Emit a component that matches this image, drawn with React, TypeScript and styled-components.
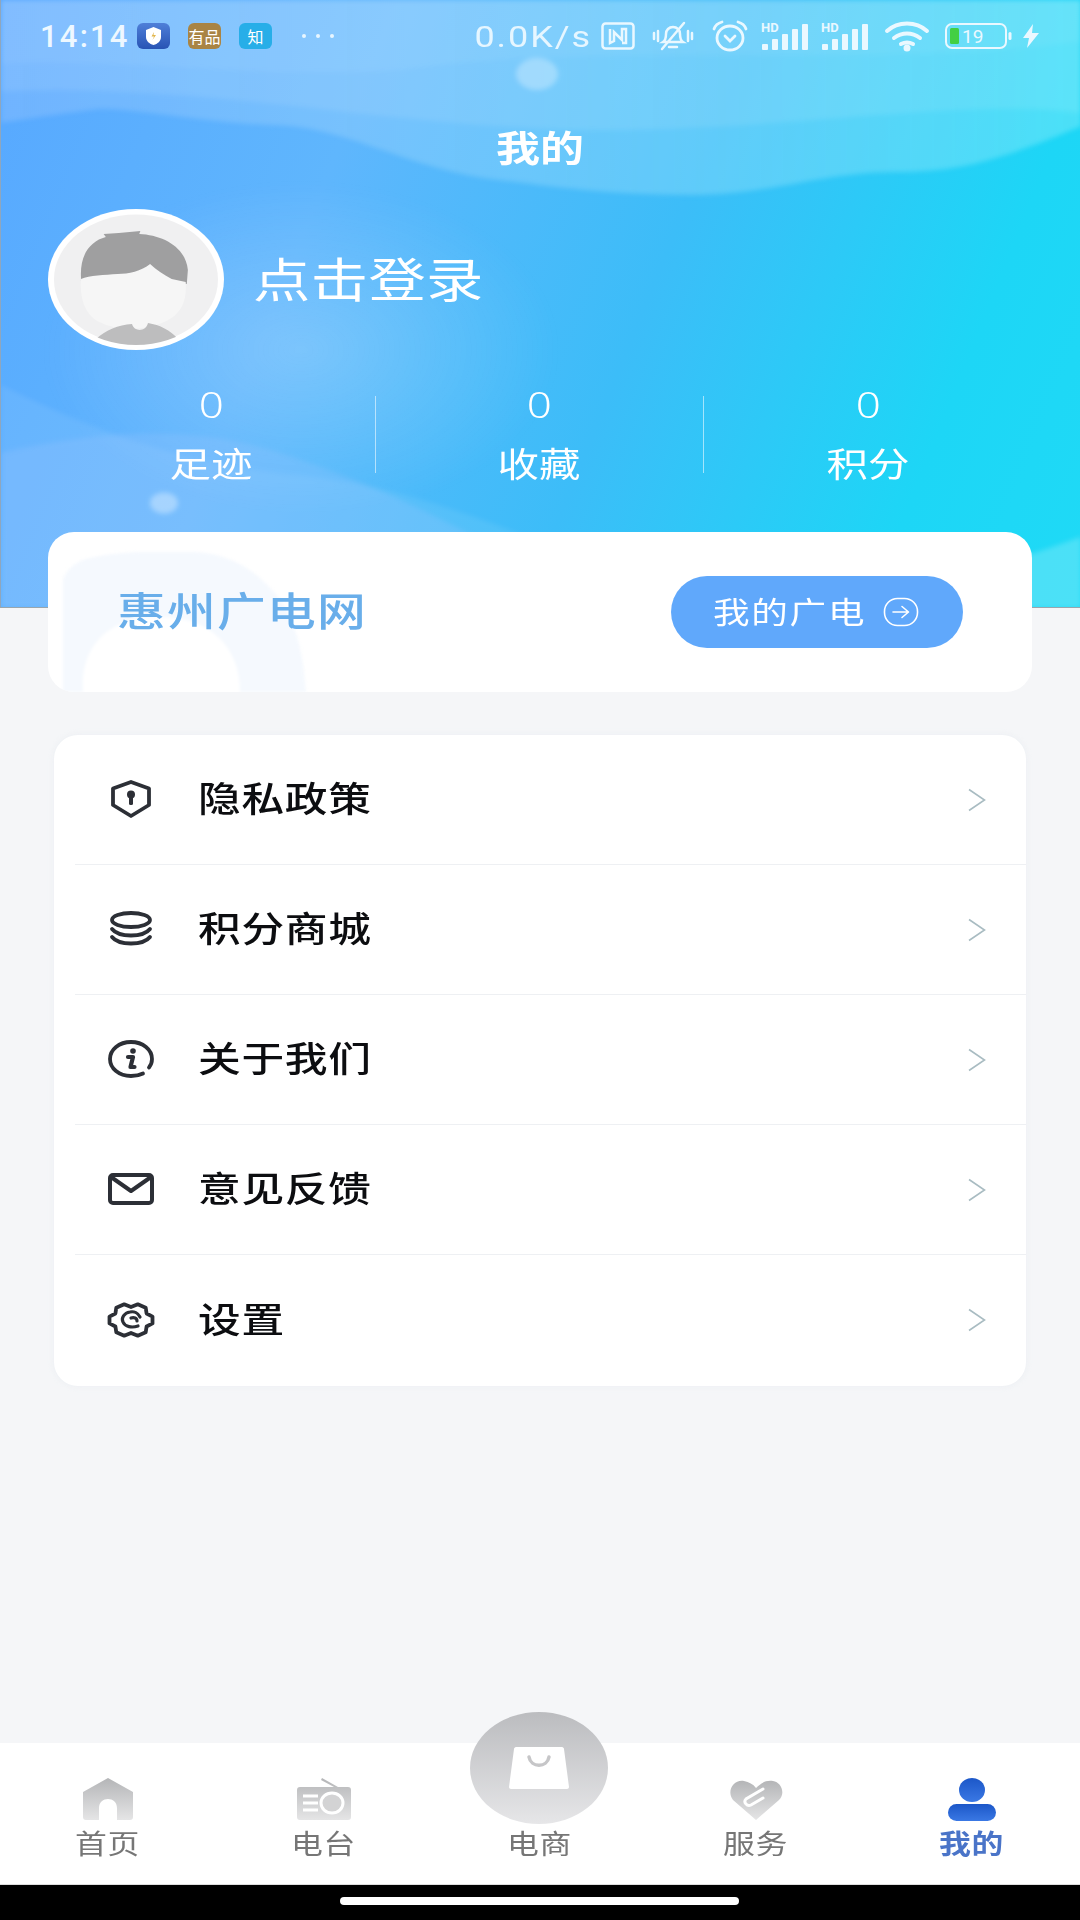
import React from "react";
import styled, { createGlobalStyle, css } from "styled-components";

const Global = createGlobalStyle`
  html, body { margin: 0; padding: 0; background: #f5f6f8; }
  * { box-sizing: border-box; }
  body { font-family: "Noto Sans CJK SC", "Noto Sans", sans-serif; }
`;

const wide = css`
  display: inline-block;
  transform: scaleX(1.22);
  white-space: nowrap;
`;

const Page = styled.div`
  width: 1080px;
  height: 1920px;
  display: flex;
  flex-direction: column;
  background: #f5f6f8;
  overflow: hidden;
`;

const Hero = styled.header`
  position: relative;
  height: 608px;
  flex: none;
  background: linear-gradient(112deg, #57a8ff 0%, #5fb6fd 30%, #3cbdf8 58%, #1dd6f6 84%, #1fdaf6 100%);
  border-bottom: 1px solid #9aa6ad;
  border-left: 1px solid #8fa6bd;
  color: #fff;
  overflow: hidden;
`;

const HeroWaves = styled.svg`
  position: absolute;
  inset: 0;
  width: 1080px;
  height: 608px;
  filter: blur(2.5px);
`;

const StatusBar = styled.div`
  position: relative;
  height: 72px;
  display: flex;
  align-items: center;
  padding: 0 40px 0 39px;
`;

const Clock = styled.span`
  font: 500 31px "Roboto", sans-serif;
  letter-spacing: 2.2px;
  width: 97px;
  color: #eef8ff;
`;

const AppBadge = styled.span<{ $bg: string; $gap: number }>`
  width: 33px;
  height: 26px;
  margin-right: ${(p) => p.$gap}px;
  border-radius: 6px;
  background: ${(p) => p.$bg};
  color: #fff;
  font-size: 16px;
  line-height: 26px;
  text-align: center;
  white-space: nowrap;
  overflow: hidden;
`;

const Dots = styled.span`
  display: flex;
  gap: 10px;
  margin-left: 30px;
`;

const Dot = styled.i`
  width: 4px;
  height: 4px;
  border-radius: 50%;
  background: #e8f6ff;
`;

const StatusRight = styled.div`
  margin-left: auto;
  display: flex;
  align-items: center;
`;

const Speed = styled.span`
  ${wide}
  transform: scaleX(1.2);
  transform-origin: right center;
  font: 400 30px "Roboto", sans-serif;
  letter-spacing: 1.6px;
  color: #e6f6ff;
  margin-right: 9px;
`;

const StatusIcon = styled.svg<{ $after?: number }>`
  display: block;
  flex: none;
  overflow: visible;
  margin-right: ${(p) => p.$after ?? 0}px;
`;

const PageTitle = styled.h1`
  position: relative;
  margin: 38px 0 0;
  height: 68px;
  padding-top: 2px;
  text-align: center;
  font-size: 36px;
  line-height: 68px;
  font-weight: 700;
  span { ${wide} }
`;

const Profile = styled.div`
  position: relative;
  display: flex;
  align-items: center;
  height: 141px;
  margin-top: 31px;
  padding-left: 47px;
  gap: 29px;
`;

const LoginText = styled.span`
  ${wide}
  transform-origin: left center;
  font-size: 47px;
  font-weight: 400;
  letter-spacing: 0.3px;
  margin-top: -6px;
`;

const Stats = styled.div`
  position: relative;
  display: grid;
  grid-template-columns: 328px 328px 1fr;
  margin-top: 46px;
  padding-left: 47px;
  width: 1032px;
`;

const Stat = styled.div<{ $divider?: boolean }>`
  height: 77px;
  display: flex;
  flex-direction: column;
  align-items: center;
  border-right: ${(p) => (p.$divider ? "1px solid rgba(255,255,255,.55)" : "none")};
`;

const StatValue = styled.span`
  ${wide}
  font: 300 36px/36px "Noto Sans", sans-serif;
  margin-top: -9px;
`;

const StatLabel = styled.span`
  ${wide}
  font-size: 34px;
  line-height: 44px;
  font-weight: 400;
  margin-top: 18px;
  margin-left: -2px;
`;

const BroadbandCard = styled.section`
  position: relative;
  margin: -76px 48px 0;
  height: 160px;
  flex: none;
  border-radius: 26px;
  background: #fff;
  display: flex;
  align-items: center;
  justify-content: space-between;
  padding: 0 69px 0 69px;
  overflow: hidden;
`;

const CardMark = styled.svg`
  position: absolute;
  left: 14px;
  top: 20px;
  filter: blur(1.5px);
`;

const Brand = styled.span`
  ${wide}
  position: relative;
  transform-origin: left center;
  font-size: 40px;
  line-height: 50px;
  font-weight: 500;
  letter-spacing: 1px;
  color: #69aeea;
  margin-top: -6px;
`;

const AccountButton = styled.button`
  position: relative;
  width: 292px;
  height: 72px;
  border: none;
  border-radius: 36px;
  background: #60a8fb;
  color: #fff;
  display: flex;
  align-items: center;
  padding: 0 0 0 42px;
  font-family: inherit;
  span {
    ${wide}
    transform-origin: left center;
    font-size: 30px;
    letter-spacing: 1.4px;
    margin-top: -4px;
  }
  svg { position: absolute; left: 212px; top: 21px; }
`;

const Menu = styled.ul`
  list-style: none;
  margin: 43px 54px 0;
  padding: 0 0 0 21px;
  height: 651px;
  flex: none;
  background: #fff;
  border-radius: 24px;
  box-shadow: 0 0 6px rgba(225, 230, 238, .45);
`;

const MenuRow = styled.li`
  height: 130px;
  display: flex;
  align-items: center;
  border-bottom: 1px solid #eef0f3;
  &:last-child { border-bottom: none; }
`;

const MenuIconSlot = styled.span`
  flex: none;
  width: 60px;
  margin-left: 26px;
  display: flex;
  justify-content: center;
  margin-top: -1px;
`;

const MenuLabel = styled.span`
  ${wide}
  transform-origin: left center;
  margin: -6px 0 0 37px;
  font-size: 35px;
  font-weight: 500;
  letter-spacing: .6px;
  color: #0c0d10;
`;

const Chevron = styled.svg`
  margin-left: auto;
  margin-right: 40px;
`;

const Spacer = styled.div`
  flex: 1;
`;

const TabBar = styled.nav`
  height: 142px;
  flex: none;
  background: #fff;
  display: grid;
  grid-template-columns: repeat(5, 1fr);
  border-bottom: 1px solid #ddd;
`;

const Tab = styled.div`
  position: relative;
  display: flex;
  flex-direction: column;
  align-items: center;
  padding-top: 35px;
`;

const TabLabel = styled.span<{ $active?: boolean }>`
  ${wide}
  transform: scaleX(1.18);
  margin-top: 1px;
  font-size: 27px;
  line-height: 40px;
  letter-spacing: .6px;
  font-weight: ${(p) => (p.$active ? 700 : 400)};
  color: ${(p) => (p.$active ? "#4a74c8" : "#767676")};
`;

const TabGlyph = styled.svg`
  display: block;
  height: 44px;
`;

const TabGap = styled.div`
  height: 44px;
`;

const ShopBubble = styled.div`
  position: absolute;
  left: 38px;
  top: -31px;
  width: 138px;
  height: 112px;
  border-radius: 50%;
  background: linear-gradient(180deg, #bbbcbf, #e6e6e8);
  display: flex;
  align-items: center;
  justify-content: center;
`;

const GestureBar = styled.div`
  flex: none;
  height: 35px;
  background: #000;
  display: flex;
  justify-content: center;
  padding-top: 12px;
`;

const GestureHandle = styled.i`
  width: 399px;
  height: 8px;
  border-radius: 4px;
  background: #fff;
  margin-left: -1px;
`;

const Signal = ({ after }: { after: number }) => (
  <StatusIcon $after={after} width="50" height="30" viewBox="0 0 50 30">
    <text x="0" y="11" fontSize="13" fontWeight="700" fontFamily="Roboto" fill="#eaf8ff">HD</text>
    <g fill="#eaf8ff">
      <rect x="1" y="23" width="6" height="6" rx="1" />
      <rect x="11" y="18" width="6" height="11" rx="1" />
      <rect x="21" y="13" width="6" height="16" rx="1" />
      <rect x="31" y="8" width="6" height="21" rx="1" />
      <rect x="41" y="3" width="6" height="26" rx="1" />
    </g>
  </StatusIcon>
);

const stroke = { fill: "none", stroke: "#2c2f36", strokeWidth: 3.8, strokeLinecap: "round" as const, strokeLinejoin: "round" as const };

const icons: Record<string, React.ReactNode> = {
  shield: (
    <svg width="44" height="40" viewBox="0 0 44 40">
      <path d="M22 3 40 9.5V26L22 37 4 26V9.5Z" {...stroke} />
      <circle cx="22" cy="15.5" r="4" fill="#2c2f36" />
      <rect x="20" y="16" width="4" height="10" rx="1.5" fill="#2c2f36" />
    </svg>
  ),
  coins: (
    <svg width="44" height="36" viewBox="0 0 44 36">
      <ellipse cx="22" cy="9" rx="19" ry="7" {...stroke} />
      <path d="M3 18c4 5 11 6.5 19 6.5S37 23 41 18" {...stroke} />
      <path d="M3 26c4 5 11 6.5 19 6.5S37 31 41 26" {...stroke} />
    </svg>
  ),
  info: (
    <svg width="48" height="38" viewBox="0 0 48 38">
      <path d="M36 33.5C32 35.5 28 36 24 36 12 36 3 28.5 3 19S12 2 24 2s21 7.5 21 17c0 3-1 6-3 8.5" {...stroke} />
      <circle cx="26" cy="11" r="2.8" fill="#2c2f36" />
      <path d="M21 17h5l-2.5 10h4" {...stroke} strokeWidth={4.2} />
    </svg>
  ),
  mail: (
    <svg width="46" height="32" viewBox="0 0 46 32">
      <rect x="2" y="2" width="42" height="28" rx="3" {...stroke} strokeWidth={4} />
      <path d="M3 4 23 18 43 4" {...stroke} strokeWidth={4} />
    </svg>
  ),
  gear: (
    <svg width="48" height="36" viewBox="0 0 48 36">
      <path d="M45.5 14.6V21.4L39.6 24.5 38.7 30.3 30.8 33.7 24 31 17.2 33.7 9.3 30.3 8.4 24.5 2.5 21.4V14.6L8.4 11.5 9.3 5.7 17.2 2.3 24 5 30.8 2.3 38.7 5.7 39.6 11.5Z" {...stroke} />
      <path d="M33 15c-2-4-6-6-10-5-6 1-9 6-7 10 2 5 9 6 15 4" {...stroke} strokeWidth={3.2} />
      <path d="M24 16c3-1 6 0 6 3" {...stroke} strokeWidth={3.2} />
    </svg>
  ),
};

const menu = [
  ["shield", "隐私政策"],
  ["coins", "积分商城"],
  ["info", "关于我们"],
  ["mail", "意见反馈"],
  ["gear", "设置"],
];

export default function App() {
  return (
    <Page>
      <Global />
      <Hero>
        <HeroWaves viewBox="0 0 1080 608" aria-hidden>
          <defs>
            <linearGradient id="topGlow" x1="0" x2="1" y1="0" y2="0">
              <stop offset="0" stopColor="#bcd4ff" stopOpacity=".24" />
              <stop offset=".5" stopColor="#c0ecff" stopOpacity=".26" />
              <stop offset="1" stopColor="#9ff2fb" stopOpacity=".36" />
            </linearGradient>
            <radialGradient id="midGlow" cx=".5" cy=".5" r=".5">
              <stop offset="0" stopColor="#ffffff" stopOpacity=".2" />
              <stop offset="1" stopColor="#ffffff" stopOpacity="0" />
            </radialGradient>
          </defs>
          <ellipse cx="300" cy="350" rx="260" ry="170" fill="url(#midGlow)" />
          <path d="M-10-10H1090V122C1000 160 960 172 895 172 820 172 770 195 690 195 600 195 540 185 482 178 400 165 340 125 270 125 190 122 120 105 90 110 50 115 20 120-10 124Z" fill="url(#topGlow)" />
          <path d="M-10-10H1090V115C980 95 800 130 600 130 400 130 200 80-10 92Z" fill="#ffffff" fillOpacity=".09" />
          <path d="M-10-10H1090V40C900 70 600 40 400 70 250 80 100 55-10 65Z" fill="#ffffff" fillOpacity=".05" />
          <path d="M-10 380C90 430 180 465 300 475 430 490 560 545 700 620H-10Z" fill="#ffffff" fillOpacity=".08" />
          <path d="M-10 455C100 430 180 425 270 450 400 490 520 560 620 620H-10Z" fill="#a9c8ff" fillOpacity=".2" />
          <path d="M860 620C950 575 1020 560 1090 533V620Z" fill="#ffffff" fillOpacity=".2" />
          <ellipse cx="536" cy="74" rx="21" ry="16" fill="#ffffff" fillOpacity=".3" />
          <ellipse cx="163" cy="503" rx="14" ry="10.5" fill="#ffffff" fillOpacity=".35" />
        </HeroWaves>

        <StatusBar>
          <Clock>14:14</Clock>
          <AppBadge $bg="linear-gradient(#4f7fd8,#2854b4)" $gap={18}>
            <svg width="33" height="26" viewBox="0 0 33 26">
              <path d="M16.5 4 24 7v7c0 4-3.5 7-7.5 8C12.5 21 9 18 9 14V7Z" fill="#fff" />
              <path d="M17 9l-2.5 4.5H17L15.5 17 19 12h-2.5Z" fill="#e2b64c" />
            </svg>
          </AppBadge>
          <AppBadge $bg="#a98444" $gap={18}>有品</AppBadge>
          <AppBadge $bg="#27aee8" $gap={0}>知</AppBadge>
          <Dots><Dot /><Dot /><Dot /></Dots>
          <StatusRight>
            <Speed>0.0K/s</Speed>
            <StatusIcon $after={16} width="34" height="28" viewBox="0 0 34 28" fill="none" stroke="#eaf8ff" strokeWidth="2.5">
              <rect x="1.5" y="1.5" width="31" height="25" rx="3" />
              <path d="M9 7V21L13 19V10L21 18V7H25V21H21" />
            </StatusIcon>
            <StatusIcon $after={15} width="44" height="30" viewBox="0 0 44 30" fill="none" stroke="#eaf8ff" strokeWidth="2.5" strokeLinecap="round">
              <path d="M12 21c3-2 3-6 3-8 0-4 3-7 7-7s7 3 7 7c0 3 0 6 3 8Z" />
              <path d="M18 26h8M33 2 11 28M3 12v6M7 10v10M37 10v10M41 12v6" />
            </StatusIcon>
            <StatusIcon $after={11} width="40" height="32" viewBox="0 0 40 32" fill="none" stroke="#eaf8ff" strokeWidth="2.8" strokeLinecap="round">
              <ellipse cx="20" cy="18" rx="13" ry="12" />
              <path d="M15 16l5 5 5-5M4 9c1-3 4-6 8-7M36 9c-1-3-4-6-8-7" />
            </StatusIcon>
            <Signal after={10} />
            <Signal after={13} />
            <StatusIcon $after={15} width="46" height="30" viewBox="0 0 46 30" fill="none" stroke="#eaf8ff" strokeWidth="4" strokeLinecap="round">
              <path d="M3 10C14 0 32 0 43 10M10 17c8-6 18-6 26 0M17 23c4-2 8-2 12 0" />
              <circle cx="23" cy="27" r="1.5" fill="#eaf8ff" />
            </StatusIcon>
            <StatusIcon $after={10} width="67" height="26" viewBox="0 0 67 26">
              <rect x="1" y="1" width="60" height="24" rx="6" fill="none" stroke="#eaf8ff" strokeWidth="2" />
              <rect x="5" y="5" width="9" height="16" rx="1.5" fill="#43cf43" />
              <rect x="63.5" y="9" width="3" height="8" rx="1.5" fill="#eaf8ff" />
              <text x="17" y="20" fontSize="19" fontFamily="Roboto" fill="#eaf8ff">19</text>
            </StatusIcon>
            <StatusIcon width="18" height="24" viewBox="0 0 18 24">
              <path d="M11 0 1 14h6L5 24 17 9h-7Z" fill="#eaf8ff" />
            </StatusIcon>
          </StatusRight>
        </StatusBar>

        <PageTitle><span>我的</span></PageTitle>

        <Profile>
          <svg width="176" height="141" viewBox="0 0 176 141" aria-hidden>
            <defs>
              <clipPath id="face"><ellipse cx="88" cy="70.5" rx="83" ry="65.5" /></clipPath>
            </defs>
            <ellipse cx="88" cy="70.5" rx="88" ry="70.5" fill="#fff" />
            <ellipse cx="88" cy="70.5" rx="82" ry="65" fill="#f0f0f1" />
            <g clipPath="url(#face)">
              <g transform="translate(-7 0) scale(1.08 1)">
                <path d="M37 68C36 45 46 32 60 28l-2-3 14-1 20-2-1 3c22 1 43 13 45 36l-1 14-14-3c-8-5-14-9-20-15-8 7-20 10-30 10-14 0-26 1-34 5Z" fill="#9f9fa0" />
                <path d="M37 70c8-4 22-4 34-5 10 0 22-3 30-10 6 6 12 10 20 15l13 3c1 18-3 32-20 40-18 9-44 9-60 0-14-8-18-24-17-43Z" fill="#f6f6f6" />
              </g>
              <path d="M48 130c10-9 22-14 36-15 2 8 14 8 16-1 12 2 22 7 30 16v10H48Z" fill="#bdbdbe" />
            </g>
          </svg>
          <LoginText>点击登录</LoginText>
        </Profile>

        <Stats>
          <Stat $divider><StatValue>0</StatValue><StatLabel>足迹</StatLabel></Stat>
          <Stat $divider><StatValue>0</StatValue><StatLabel>收藏</StatLabel></Stat>
          <Stat><StatValue>0</StatValue><StatLabel>积分</StatLabel></Stat>
        </Stats>
      </Hero>

      <BroadbandCard>
        <CardMark width="246" height="140" viewBox="0 0 246 140" aria-hidden>
          <path d="M1 140V30C1 20 15 8 28 6 60-2 120-2 144 1 170 5 190 18 200 28 225 50 240 80 244 140Z" fill="#f5f9fe" />
          <path d="M21 140C18 100 40 65 98 65 148 65 178 95 178 140Z" fill="#fff" />
        </CardMark>
        <Brand>惠州广电网</Brand>
        <AccountButton>
          <span>我的广电</span>
          <svg width="36" height="30" viewBox="0 0 36 30" fill="none" stroke="#fff" strokeWidth="1.6" strokeLinecap="round" strokeLinejoin="round">
            <rect x="1.5" y="1.5" width="33" height="27" rx="13" />
            <path d="M10 15h15M19 9.5 25.5 15 19 20.5" />
          </svg>
        </AccountButton>
      </BroadbandCard>

      <Menu>
        {menu.map(([icon, label]) => (
          <MenuRow key={label}>
            <MenuIconSlot>{icons[icon]}</MenuIconSlot>
            <MenuLabel>{label}</MenuLabel>
            <Chevron width="18" height="24" viewBox="0 0 18 24" fill="none" stroke="#a9bcc2" strokeWidth="1.6">
              <path d="M1 1.5 16.5 12 1 22.5" />
            </Chevron>
          </MenuRow>
        ))}
      </Menu>

      <Spacer />

      <TabBar>
        <Tab>
          <TabGlyph width="52" viewBox="0 0 52 44" aria-hidden>
            <defs>
              <linearGradient id="tabGrey" x1="0" x2="0" y1="0" y2="1">
                <stop offset="0" stopColor="#b4b5b7" />
                <stop offset="1" stopColor="#e5e5e6" />
              </linearGradient>
            </defs>
            <path d="M1 14 26 0l25 14v25c0 2-1 3-3 3H35V30c0-12-18-12-18 0v12H4c-2 0-3-1-3-3Z" fill="url(#tabGrey)" />
          </TabGlyph>
          <TabLabel>首页</TabLabel>
        </Tab>
        <Tab>
          <TabGlyph width="56" viewBox="0 0 56 44" aria-hidden>
            <path d="M26 0l16 9h10c2 0 3 1 3 3v27c0 2-1 3-3 3H4c-2 0-3-1-3-3V12c0-2 1-3 3-3h34L25 2Z" fill="url(#tabGrey)" />
            <path d="M7 18h15M7 25h15M7 32h15" stroke="#fff" strokeWidth="3" />
            <ellipse cx="36" cy="25" rx="11" ry="10" fill="#d3d3d4" stroke="#fff" strokeWidth="3" />
          </TabGlyph>
          <TabLabel>电台</TabLabel>
        </Tab>
        <Tab>
          <ShopBubble>
            <svg width="62" height="42" viewBox="0 0 62 42" aria-hidden>
              <path d="M6 2c0-1 1-2 2-2h46c1 0 2 1 2 2l5 38c0 1-1 2-2 2H3c-1 0-2-1-2-2Z" fill="#fff" />
              <path d="M21 10c2 11 18 11 20 0" fill="none" stroke="#c6c6c8" strokeWidth="3.5" strokeLinecap="round" />
            </svg>
          </ShopBubble>
          <TabGap />
          <TabLabel>电商</TabLabel>
        </Tab>
        <Tab>
          <TabGlyph width="54" viewBox="0 0 54 44" aria-hidden>
            <path d="M27 42 4 22C-3 13 5 1 15 3c5 1 9 3 12 7 5-5 10-8 17-7 8 1 13 12 6 19Z" fill="url(#tabGrey)" />
            <path d="M34 11 17 21c-3 3 1 8 5 6l12-7" fill="none" stroke="#fff" strokeWidth="3" strokeLinecap="round" />
          </TabGlyph>
          <TabLabel>服务</TabLabel>
        </Tab>
        <Tab>
          <TabGlyph width="48" viewBox="0 0 48 44" aria-hidden>
            <defs>
              <linearGradient id="tabBlue" x1="0" x2="0" y1="0" y2="1">
                <stop offset="0" stopColor="#1c57c8" />
                <stop offset="1" stopColor="#3a78e4" />
              </linearGradient>
            </defs>
            <ellipse cx="24" cy="12" rx="13" ry="12" fill="url(#tabBlue)" />
            <rect x="0" y="26" width="48" height="17" rx="8.5" fill="url(#tabBlue)" />
          </TabGlyph>
          <TabLabel $active>我的</TabLabel>
        </Tab>
      </TabBar>
      <GestureBar><GestureHandle /></GestureBar>
    </Page>
  );
}
